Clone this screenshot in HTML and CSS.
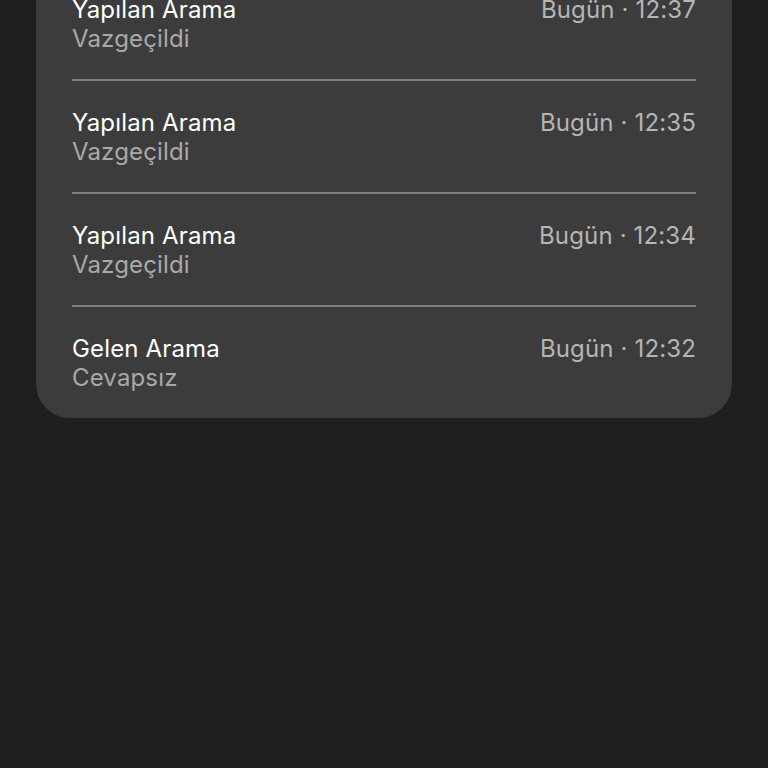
FILE: index.html
```html
<!DOCTYPE html>
<html lang="tr">
<head>
    <meta charset="UTF-8">
    <meta name="viewport" content="width=device-width, initial-scale=1.0">
    <title>Arama Geçmişi</title>
    <link rel="stylesheet" href="styles.css">
</head>
<body>
<div class="card">
    <div class="call">
        <div class="call_info">
            <div class="call_type">Yapılan Arama</div>
            <div class="call_status">Vazgeçildi</div>
        </div>
        <div class="call_time">Bugün · 12:37</div>
    </div>
    <div class="call">
        <div class="call_info">
            <div class="call_type">Yapılan Arama</div>
            <div class="call_status">Vazgeçildi</div>
        </div>
        <div class="call_time">Bugün · 12:35</div>
    </div>
    <div class="call">
        <div class="call_info">
            <div class="call_type">Yapılan Arama</div>
            <div class="call_status">Vazgeçildi</div>
        </div>
        <div class="call_time">Bugün · 12:34</div>
    </div>
    <div class="call">
        <div class="call_info">
            <div class="call_type">Gelen Arama</div>
            <div class="call_status">Cevapsız</div>
        </div>
        <div class="call_time">Bugün · 12:32</div>
    </div>
</div>
</body>
</html>
```

FILE: styles.css
```css
body, html {
    margin: 0;
    padding: 0;
    width: 100%;
    height: 100%;
    background-color: #1f1f1f;
    font-family: "Inter", "Noto Sans", sans-serif;
}
.card {
    margin: -32px 36px 0 36px;
    padding: 0 36px 0 36px;
    background-color: #3c3c3c;
    border-radius: 34px;
}
.call {
    display: flex;
    justify-content: space-between;
    align-items: flex-start;
    padding: 27px 0 26px 0;
    border-bottom: 2px solid #7f7f7f;
    font-size: 24px;
    line-height: 29px;
    letter-spacing: 0.15px;
}
.call:last-child {
    border-bottom: none;
}
.call_type {
    color: #ffffff;
}
.call_status {
    color: #a9a9a9; /* grey subtitle */
}
.call_time {
    color: #b5b5b5;
}
```
